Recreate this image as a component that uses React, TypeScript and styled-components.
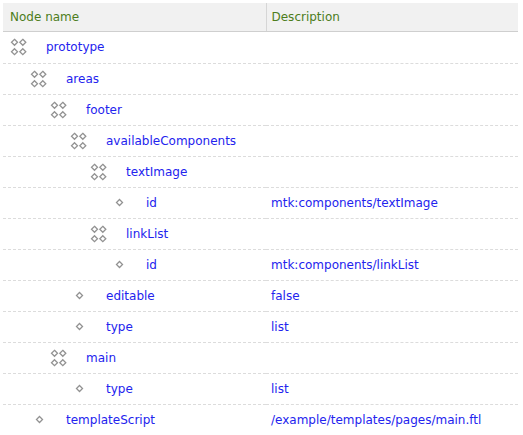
import styled, { createGlobalStyle } from 'styled-components';

type Node = {
  name: string;
  level: number;
  branch?: boolean;
  desc?: string;
};

const nodes: Node[] = [
  { name: 'prototype', level: 0, branch: true },
  { name: 'areas', level: 1, branch: true },
  { name: 'footer', level: 2, branch: true },
  { name: 'availableComponents', level: 3, branch: true },
  { name: 'textImage', level: 4, branch: true },
  { name: 'id', level: 5, desc: 'mtk:components/textImage' },
  { name: 'linkList', level: 4, branch: true },
  { name: 'id', level: 5, desc: 'mtk:components/linkList' },
  { name: 'editable', level: 3, desc: 'false' },
  { name: 'type', level: 3, desc: 'list' },
  { name: 'main', level: 2, branch: true },
  { name: 'type', level: 3, desc: 'list' },
  { name: 'templateScript', level: 1, desc: '/example/templates/pages/main.ftl' },
];

const GlobalStyle = createGlobalStyle`
  html, body {
    margin: 0;
    padding: 0;
    background: #fff;
  }
  body {
    font-family: "DejaVu Sans", Verdana, sans-serif;
    font-size: 12px;
  }
  * {
    box-sizing: border-box;
  }
`;

const Wrap = styled.div`
  padding: 3px 5px 0 3px;
`;

const Table = styled.table`
  width: 515px;
  border-collapse: collapse;
  table-layout: fixed;
`;

const HeadCell = styled.th<{ $first?: boolean }>`
  height: 28px;
  padding: 1px 0 0 ${(p) => (p.$first ? 7 : 5)}px;
  background: #f1f1f1;
  color: #4d7d1c;
  font-weight: normal;
  text-align: left;
  border-bottom: 1px solid #cfcfcf;
  box-shadow: 0 1px 0 #ebebeb;
  border-left: ${(p) => (p.$first ? 'none' : '1px solid #d6d6d6')};
  width: ${(p) => (p.$first ? '263px' : 'auto')};
`;

const Row = styled.tr<{ $last?: boolean }>`
  height: 31px;
  border-bottom: ${(p) => (p.$last ? 'none' : '1px dashed #dcdcdc')};
`;

const Spacer = styled.tr`
  height: 1px;
`;

const NameCell = styled.td<{ $level: number }>`
  padding: 0 0 0 ${(p) => 7 + p.$level * 20}px;
  white-space: nowrap;
`;

const NameBox = styled.div`
  display: flex;
  align-items: center;
  gap: 18px;
  color: #2323ee;
`;

const IconBox = styled.span`
  width: 18px;
  height: 17px;
  display: flex;
  align-items: center;
  justify-content: center;
  flex: none;
`;

const DescCell = styled.td`
  padding: 0 0 0 5px;
  color: #2323ee;
  white-space: nowrap;
`;

const Diamond = ({ x, y }: { x: number; y: number }) => (
  <path
    d={`M${x} ${y - 3}L${x + 3} ${y}L${x} ${y + 3}L${x - 3} ${y}Z`}
    fill="none"
    stroke="#929292"
    strokeWidth="1.3"
  />
);

const BranchIcon = () => (
  <svg width="18" height="18" viewBox="0 0 18 18">
    <Diamond x={4.5} y={4.3} />
    <Diamond x={12.8} y={4.3} />
    <Diamond x={4.5} y={13.7} />
    <Diamond x={12.8} y={13.7} />
  </svg>
);

const LeafIcon = () => (
  <svg width="9" height="9" viewBox="0 0 9 9">
    <Diamond x={4.5} y={4.5} />
  </svg>
);

const App = () => {
  return (
    <>
      <GlobalStyle />
      <Wrap>
        <Table>
          <thead>
            <tr>
              <HeadCell $first>Node name</HeadCell>
              <HeadCell>Description</HeadCell>
            </tr>
          </thead>
          <tbody>
            <Spacer />
            {nodes.map((n, i) => (
              <Row key={i} $last={i === nodes.length - 1}>
                <NameCell $level={n.level}>
                  <NameBox>
                    <IconBox>{n.branch ? <BranchIcon /> : <LeafIcon />}</IconBox>
                    <span>{n.name}</span>
                  </NameBox>
                </NameCell>
                <DescCell>{n.desc}</DescCell>
              </Row>
            ))}
          </tbody>
        </Table>
      </Wrap>
    </>
  );
};

export default App;
